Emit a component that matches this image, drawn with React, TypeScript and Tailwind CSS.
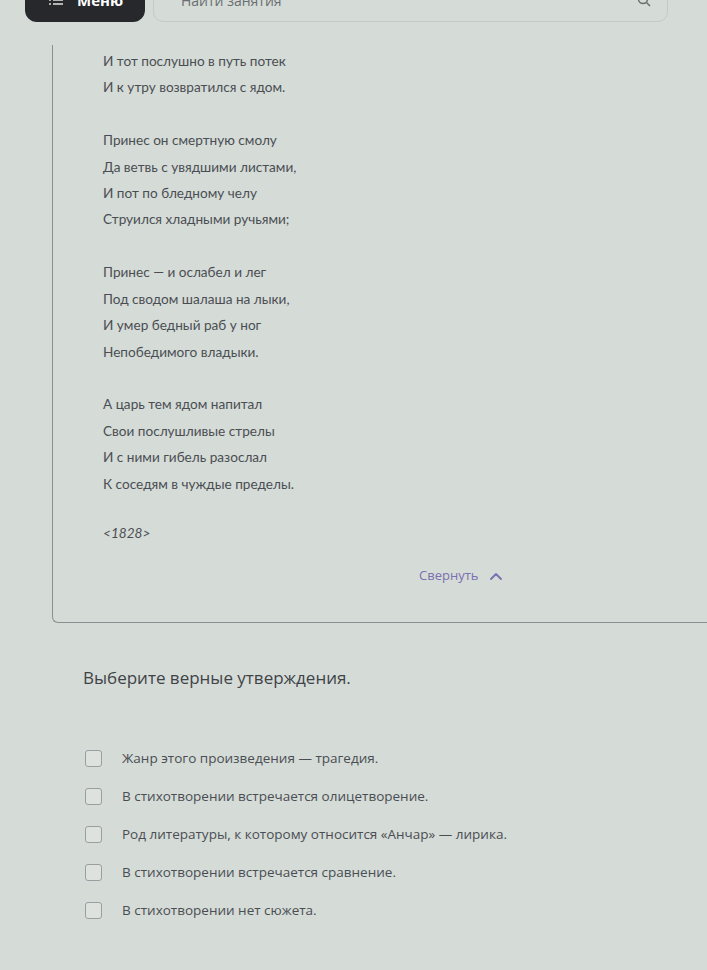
import React from "react";

const stanzas: string[][] = [
  ["И тот послушно в путь потек", "И к утру возвратился с ядом."],
  [
    "Принес он смертную смолу",
    "Да ветвь с увядшими листами,",
    "И пот по бледному челу",
    "Струился хладными ручьями;",
  ],
  [
    "Принес — и ослабел и лег",
    "Под сводом шалаша на лыки,",
    "И умер бедный раб у ног",
    "Непобедимого владыки.",
  ],
  [
    "А царь тем ядом напитал",
    "Свои послушливые стрелы",
    "И с ними гибель разослал",
    "К соседям в чуждые пределы.",
  ],
];

const options = [
  "Жанр этого произведения — трагедия.",
  "В стихотворении встречается олицетворение.",
  "Род литературы, к которому относится «Анчар» — лирика.",
  "В стихотворении встречается сравнение.",
  "В стихотворении нет сюжета.",
];

export default function App() {
  return (
    <div className="w-[707px] h-[970px] overflow-hidden bg-[#d5dbd6] font-['Open_Sans',sans-serif]">
      {/* top bar */}
      <div className="flex items-start pl-[25px] h-[22px]">
        <div className="-mt-[18px] h-[40px] w-[120px] rounded-[12px] bg-[#26282c] flex items-center gap-[14px] pl-[24px] pb-[4px]">
          <svg width="14" height="12" viewBox="0 0 14 12" fill="none" stroke="#d8d8d8" strokeWidth="1.6">
            <line x1="0" y1="2" x2="2" y2="2" />
            <line x1="4" y1="2" x2="14" y2="2" />
            <line x1="0" y1="6" x2="2" y2="6" />
            <line x1="4" y1="6" x2="14" y2="6" />
            <line x1="0" y1="10" x2="2" y2="10" />
            <line x1="4" y1="10" x2="14" y2="10" />
          </svg>
          <span className="text-white text-[15px] font-bold">Меню</span>
        </div>
        <div className="-mt-[18px] ml-[8px] h-[40px] w-[515px] rounded-[10px] border border-[#c4cac5] flex items-center justify-between pl-[27px] pr-[16px] pb-[4px]">
          <span className="text-[#6a6e72] text-[14px]">Найти занятия</span>
          <svg width="14" height="14" viewBox="0 0 14 14" fill="none" stroke="#6a6e72" strokeWidth="1.5">
            <circle cx="6" cy="6" r="4.5" />
            <line x1="9.5" y1="9.5" x2="13" y2="13" />
          </svg>
        </div>
      </div>

      {/* poem panel */}
      <div className="mt-[23px] ml-[52px] h-[578px] border-l border-b border-[#8b8f93] rounded-bl-[6px] pl-[50px] pt-[3px] font-['Lato',sans-serif] text-[#4a4e54] text-[13.6px]">
        <div className="flex flex-col">
          {stanzas.map((st, i) => (
            <div key={i} className={i > 0 ? "mt-[26.5px]" : ""}>
              {st.map((l) => (
                <div key={l} className="leading-[26.4px] h-[26.4px]">
                  {l}
                </div>
              ))}
            </div>
          ))}
        </div>
        <div className="mt-[23px] italic leading-[26px]">&lt;1828&gt;</div>
        <div className="mt-[20px] pl-[316px] flex items-center gap-[12px] font-['Open_Sans',sans-serif]">
          <span className="text-[#7a70b2] text-[13px]">Свернуть</span>
          <svg width="12" height="8" viewBox="0 0 12 8" fill="none" stroke="#7a70b2" strokeWidth="1.8" strokeLinecap="round" strokeLinejoin="round">
            <polyline points="1,7 6,2 11,7" />
          </svg>
        </div>
      </div>

      {/* question */}
      <div className="pl-[83px] mt-[43px] text-[17px] text-[#3f4348] leading-[24px]">
        Выберите верные утверждения.
      </div>

      <div className="mt-[59px] pl-[85px] flex flex-col gap-[20px]">
        {options.map((o) => (
          <div key={o} className="flex items-center h-[18px]">
            <div className="w-[17px] h-[17px] rounded-[3px] border-[1.5px] border-[#9a9ea2] bg-[#dde2de]" />
            <span className="ml-[20px] text-[13.5px] text-[#4a4e54]">{o}</span>
          </div>
        ))}
      </div>
    </div>
  );
}
